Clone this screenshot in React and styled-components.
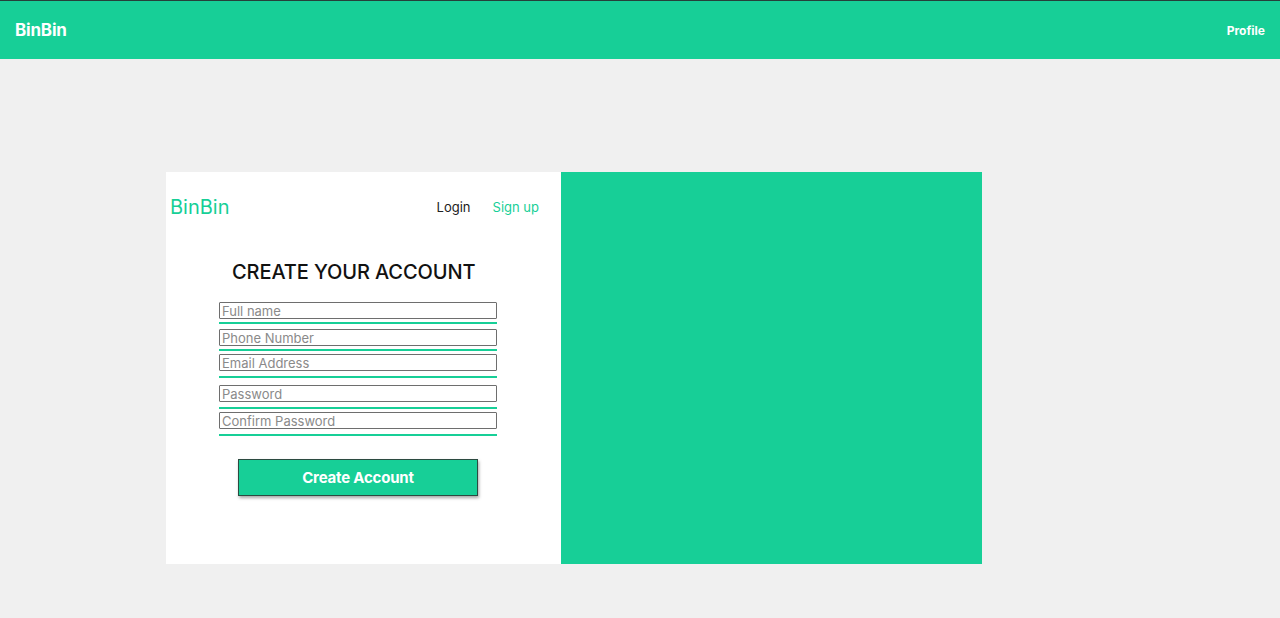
import React from "react";
import styled, { createGlobalStyle } from "styled-components";

const Global = createGlobalStyle`
  html, body { margin: 0; padding: 0; background: #f0f0f0; }
  body { font-family: Inter, "Noto Sans", sans-serif; }
  * { box-sizing: border-box; }
`;

const GREEN = "#17cf97";

const TopBar = styled.header`
  height: 59px;
  background: ${GREEN};
  border-top: 1px solid #26403a;
  display: flex;
  align-items: center;
  justify-content: space-between;
  padding: 0 15px 0 15px;
`;

const Brand = styled.div`
  color: #fff;
  font-weight: 700;
  font-size: 17px;
  letter-spacing: -0.2px;
`;

const ProfileLink = styled.a`
  color: #fff;
  font-weight: 700;
  font-size: 12px;
  text-decoration: none;
`;

const Main = styled.main`
  padding: 113px 0 0 166px;
`;

const Card = styled.section`
  display: flex;
  width: 816px;
  height: 392px;
`;

const LeftPanel = styled.div`
  width: 395px;
  background: #fff;
  display: flex;
  flex-direction: column;
`;

const RightPanel = styled.div`
  flex: 1;
  background: ${GREEN};
`;

const Nav = styled.nav`
  display: flex;
  align-items: center;
  justify-content: space-between;
  padding: 22px 22px 0 4px;
  height: 48px;
`;

const InnerBrand = styled.div`
  color: ${GREEN};
  font-size: 20px;
  font-weight: 400;
`;

const Links = styled.div`
  display: flex;
  gap: 22px;
  font-size: 13px;
`;

const NavLink = styled.a`
  color: ${(p) => (p.$accent ? GREEN : "#222")};
  text-decoration: none;
`;

const Title = styled.h1`
  margin: 40px 0 0 66px;
  font-size: 20px;
  font-weight: 500;
  color: #111;
  letter-spacing: -0.1px;
`;

const Form = styled.form`
  display: flex;
  flex-direction: column;
  padding-left: 53px;
  margin-top: 18px;
`;

const Field = styled.div`
  width: 278px;
  margin-top: ${(p) => p.$gap}px;
  border-bottom: 2px solid ${GREEN};
  padding-bottom: ${(p) => p.$pad}px;
`;

const Input = styled.input`
  display: block;
  width: 100%;
  height: 17px;
  border: 1px solid #6e6e6e;
  border-radius: 1px;
  padding: 0 2px;
  font-family: Inter, "Noto Sans", sans-serif;
  font-size: 13px;
  color: #333;
  outline: none;
  &::placeholder { color: #8a8a8a; }
`;

const Button = styled.button`
  margin: 23px 0 0 19px;
  width: 240px;
  height: 37px;
  background: ${GREEN};
  border: 1px solid #2c4a40;
  box-shadow: 1px 2px 3px rgba(0,0,0,0.35);
  color: #fff;
  font-family: Inter, "Noto Sans", sans-serif;
  font-weight: 700;
  font-size: 15px;
  letter-spacing: -0.2px;
`;

const fields = [
  { ph: "Full name", gap: 0, pad: 3 },
  { ph: "Phone Number", gap: 5, pad: 3 },
  { ph: "Email Address", gap: 3, pad: 5 },
  { ph: "Password", gap: 7, pad: 5 },
  { ph: "Confirm Password", gap: 3, pad: 5 },
];

export default function App() {
  return (
    <>
      <Global />
      <TopBar>
        <Brand>BinBin</Brand>
        <ProfileLink href="#">Profile</ProfileLink>
      </TopBar>
      <Main>
        <Card>
          <LeftPanel>
            <Nav>
              <InnerBrand>BinBin</InnerBrand>
              <Links>
                <NavLink href="#">Login</NavLink>
                <NavLink href="#" $accent>Sign up</NavLink>
              </Links>
            </Nav>
            <Title>CREATE YOUR ACCOUNT</Title>
            <Form onSubmit={(e) => e.preventDefault()}>
              {fields.map((f) => (
                <Field key={f.ph} $gap={f.gap} $pad={f.pad}>
                  <Input placeholder={f.ph} />
                </Field>
              ))}
              <Button type="submit">Create Account</Button>
            </Form>
          </LeftPanel>
          <RightPanel />
        </Card>
      </Main>
    </>
  );
}
